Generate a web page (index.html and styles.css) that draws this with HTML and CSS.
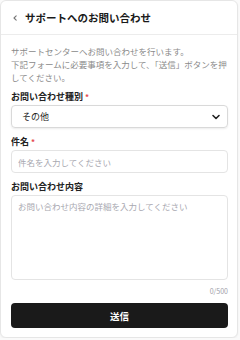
FILE: index.html
```html
<!DOCTYPE html>
<html lang="ja">
<head>
    <meta charset="UTF-8">
    <meta name="viewport" content="width=device-width, initial-scale=1.0">
    <title>サポートへのお問い合わせ</title>
    <link rel="stylesheet" href="styles.css">
</head>
<body>
    <div class="card">
        <div class="card-header">
            <button class="back-btn" aria-label="戻る">
                <svg width="8" height="8" viewBox="0 0 8 8"><path d="M5.2 1.8 L3 4 L5.2 6.2" fill="none" stroke="#777" stroke-width="1.1" stroke-linecap="round" stroke-linejoin="round"/></svg>
            </button>
            <h1>サポートへのお問い合わせ</h1>
        </div>
        <form class="card-body">
            <p class="intro">サポートセンターへお問い合わせを行います。<br>下記フォームに必要事項を入力して、「送信」ボタンを押してください。</p>

            <div class="field">
                <label>お問い合わせ種別 <span class="req">*</span></label>
                <div class="select">
                    <span>その他</span>
                    <svg width="10" height="10" viewBox="0 0 10 10"><path d="M2 3.5 L5 6.5 L8 3.5" fill="none" stroke="#222" stroke-width="1.6" stroke-linecap="round" stroke-linejoin="round"/></svg>
                </div>
            </div>

            <div class="field">
                <label>件名 <span class="req">*</span></label>
                <input type="text" class="input" placeholder="件名を入力してください">
            </div>

            <div class="field field-last">
                <label>お問い合わせ内容</label>
                <textarea class="input textarea" placeholder="お問い合わせ内容の詳細を入力してください"></textarea>
                <div class="counter">0/500</div>
            </div>

            <button type="button" class="submit">送信</button>
        </form>
    </div>
</body>
</html>
```

FILE: styles.css
```css
* {
    margin: 0;
    padding: 0;
    box-sizing: border-box;
}

body {
    font-family: "Noto Sans CJK JP", "Noto Sans", sans-serif;
    background: #fafafa;
    color: #222;
}

.card {
    width: 238px;
    height: 338px;
    background: #fff;
    border: 1px solid #e6e6e6;
    border-radius: 6px;
    box-shadow: 0 1px 2px rgba(0, 0, 0, 0.05);
    overflow: hidden;
}

.card-header {
    height: 34px;
    display: flex;
    align-items: center;
    gap: 5px;
    padding: 0 9px;
    border-bottom: 1px solid #ececec;
}

.back-btn {
    background: none;
    border: none;
    width: 10px;
    height: 10px;
    display: flex;
    align-items: center;
    justify-content: center;
}

.card-header h1 {
    font-size: 10.5px;
    font-weight: 700;
    color: #1a1a1a;
}

.card-body {
    padding: 10px 9px 0 10px;
    display: flex;
    flex-direction: column;
}

.intro {
    font-size: 8.5px;
    line-height: 13px;
    color: #8a8a8a;
    margin-bottom: 7px;
}

.field {
    display: flex;
    flex-direction: column;
    margin-bottom: 8px;
}

.field-last {
    margin-bottom: 7px;
}

.field label {
    font-size: 9px;
    font-weight: 700;
    line-height: 12px;
    color: #222;
    margin-bottom: 2px;
}

.req {
    color: #e5484d;
    font-size: 8px;
    vertical-align: top;
}

.select {
    height: 23px;
    border: 1px solid #d9d9d9;
    border-radius: 4px;
    box-shadow: 0 1px 2px rgba(0, 0, 0, 0.08);
    display: flex;
    align-items: center;
    justify-content: space-between;
    padding: 0 6px 0 10px;
    font-size: 9px;
    color: #222;
}

.input {
    height: 23px;
    border: 1px solid #e4e4e4;
    border-radius: 4px;
    padding: 0 6px;
    font-family: inherit;
    font-size: 8.5px;
    color: #222;
    outline: none;
}

.input::placeholder {
    color: #a8a8b0;
}

.textarea {
    height: 85px;
    padding: 4px 6px;
    resize: none;
    line-height: 13px;
}

.counter {
    text-align: right;
    font-size: 7px;
    line-height: 10px;
    color: #a0a0a8;
    margin-top: 6px;
}

.submit {
    height: 25px;
    background: #1a1a1a;
    color: #fff;
    border: none;
    border-radius: 4px;
    font-family: inherit;
    font-size: 9.5px;
    font-weight: 700;
}
```
